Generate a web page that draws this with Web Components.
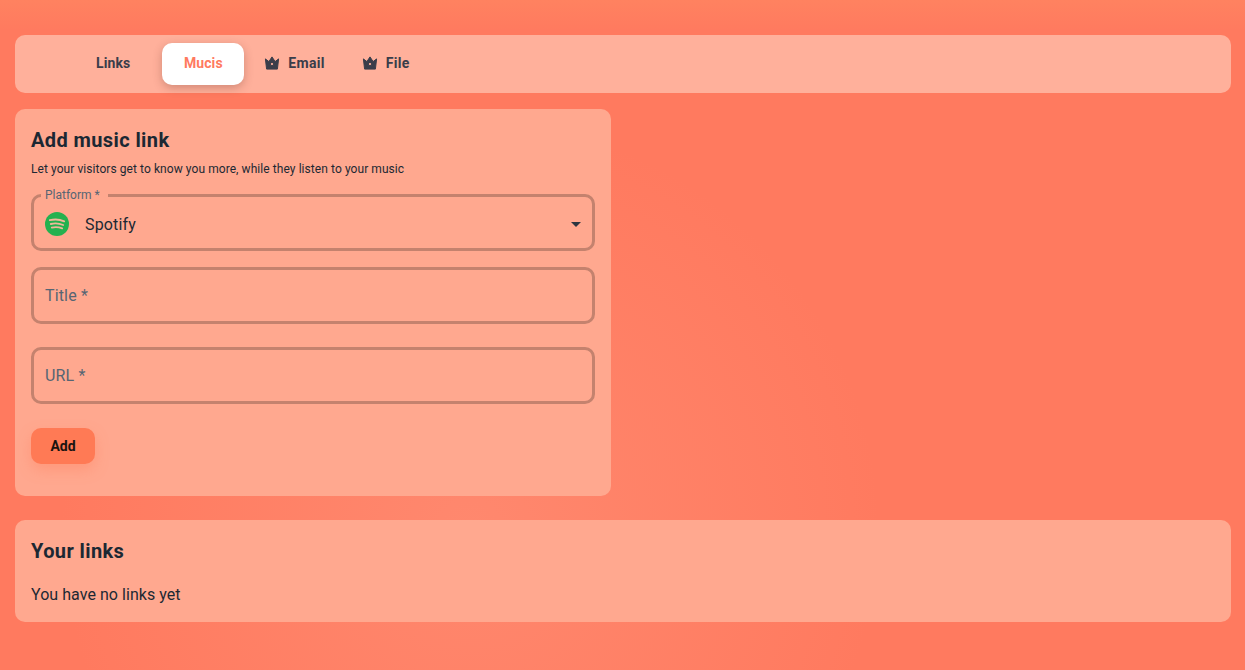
<!DOCTYPE html>
<html>
<head>
<meta charset="utf-8">
<title>Music links</title>
<style>
	html, body { margin: 0; height: 100%; }
	body {
		height: 670px;
		overflow: hidden;
		font-family: Roboto, "Liberation Sans", sans-serif;
		color: #1c2833;
		background:
			radial-gradient(circle 410px at 470px 530px, rgba(255,150,125,0.5), rgba(255,150,125,0) 100%),
			linear-gradient(180deg, #ff8260 0, #ff7a5f 30px, #ff7a5f 100%);
	}
	app-page { display: block; }
</style>
</head>
<body>
<template id="page-tpl">
	<style>
		:host { display: flex; flex-direction: column; padding: 35px 14px 0 15px; }
		.top { margin-bottom: 16px; }
		.bottom { margin-top: 24px; }
	</style>
	<tab-bar class="top">
		<tab-item class="first">Links</tab-item>
		<tab-item active>Mucis</tab-item>
		<tab-item crown>Email</tab-item>
		<tab-item crown>File</tab-item>
	</tab-bar>
	<music-form></music-form>
	<links-list class="bottom"></links-list>
</template>

<template id="bar-tpl">
	<style>
		:host {
			display: flex;
			align-items: center;
			height: 58px;
			box-sizing: border-box;
			padding-left: 59px;
			background: #ffb09b;
			border-radius: 10px;
		}
	</style>
	<slot></slot>
</template>

<template id="tab-tpl">
	<style>
		:host {
			display: flex;
			align-items: center;
			justify-content: center;
			height: 42px;
			padding: 0 22px 2px;
			box-sizing: border-box;
			border-radius: 10px;
			font-size: 14px;
			font-weight: 700;
			letter-spacing: 0.1px;
			color: #3a3d4a;
		}
		:host(.first) { margin-right: 10px; }
		:host([active]) {
			width: 82px;
			padding-left: 0;
			padding-right: 0;
			background: #fff;
			color: #ff7a5f;
			box-shadow: 0 3px 10px rgba(90,40,30,0.28);
		}
		svg { display: none; width: 16px; height: 16px; margin-right: 8px; fill: #3a3d4a; stroke: #3a3d4a; stroke-width: 1; stroke-linejoin: round; }
		:host([crown]) svg { display: block; }
		:host([crown]) { padding: 0 17px 2px 20px; letter-spacing: 0.3px; }
	</style>
	<svg viewBox="0 0 16 16"><path fill-rule="evenodd" d="M1.4 3.9L4.9 6.6 8 1.9l3.1 4.7 3.5-2.7-1.2 10.2H2.6L1.4 3.9zM8 7.4a1.6 1.6 0 1 0 0 3.2 1.6 1.6 0 0 0 0-3.2z"/></svg>
	<slot></slot>
</template>

<template id="form-tpl">
	<style>
		:host {
			display: block;
			width: 596px;
			box-sizing: border-box;
			padding: 16px 16px 32px;
			background: #ffa88f;
			border-radius: 10px;
		}
		h2 { margin: 0; font-size: 20px; line-height: 30px; font-weight: 700; letter-spacing: 0.4px; color: #1c2833; }
		p { margin: 5px 0 16px; font-size: 12px; line-height: 18px; letter-spacing: 0.07px; color: #1c2833; }
		.fields { display: flex; flex-direction: column; }
		outlined-field[name=title] { margin-top: 16px; }
		outlined-field[name=url] { margin-top: 23px; }
		button {
			display: block;
			margin-top: 24px;
			width: 64px;
			height: 36px;
			border: 0;
			border-radius: 10px;
			background: #ff7a55;
			color: #1a1410;
			font: 700 14px Roboto, sans-serif;
			box-shadow: 0 6px 14px rgba(255,122,85,0.35);
		}
	</style>
	<h2>Add music link</h2>
	<p>Let your visitors get to know you more, while they listen to your music</p>
	<div class="fields">
		<outlined-field label="Platform *" select>
			<svg slot="icon" width="24" height="24" viewBox="0 0 24 24">
				<circle cx="12" cy="12" r="12" fill="#24b14f"/>
				<path d="M4.8 8.2c4.6-1.1 10-.8 14.4 1.1M5.8 12c3.8-.9 8.6-.6 12.4 1M6.8 15.6c3.2-.7 7.2-.5 10.4.8" fill="none" stroke="#f0b89a" stroke-width="1.8" stroke-linecap="round"/>
			</svg>
			Spotify
		</outlined-field>
		<outlined-field name="title" placeholder="Title *"></outlined-field>
		<outlined-field name="url" placeholder="URL *"></outlined-field>
	</div>
	<button>Add</button>
</template>

<template id="field-tpl">
	<style>
		:host {
			display: flex;
			align-items: center;
			position: relative;
			height: 57px;
			box-sizing: border-box;
			padding: 0 11px;
			border: 3px solid #c4826e;
			border-radius: 10px;
			font-size: 16px;
			letter-spacing: 0.15px;
			color: #1c2833;
		}
		:host([select]) { padding-top: 3px; }
		.legend {
			display: none;
			position: absolute;
			top: -10px;
			left: 7px;
			padding: 0 8px 0 4px;
			background: #ffa88f;
			font-size: 12px;
			line-height: 16px;
			letter-spacing: 0;
			color: #566573;
		}
		:host([label]) .legend { display: block; }
		.ph { color: #566573; }
		::slotted(svg) { margin-right: 16px; flex: none; }
		.arrow {
			display: none;
			position: absolute;
			right: 11px;
			top: 25px;
			width: 0;
			height: 0;
			border-left: 5px solid transparent;
			border-right: 5px solid transparent;
			border-top: 5px solid #2c3540;
		}
		:host([select]) .arrow { display: block; }
	</style>
	<span class="legend"></span>
	<slot name="icon"></slot>
	<slot></slot>
	<span class="ph"></span>
	<span class="arrow"></span>
</template>

<template id="list-tpl">
	<style>
		:host {
			display: block;
			height: 102px;
			box-sizing: border-box;
			padding: 16px;
			background: #ffa88f;
			border-radius: 10px;
		}
		h2 { margin: 0; font-size: 20px; line-height: 30px; font-weight: 700; letter-spacing: 0.4px; color: #1c2833; }
		p { margin: 16px 0 0; font-size: 16px; line-height: 26px; letter-spacing: 0.05px; color: #1c2833; }
	</style>
	<h2>Your links</h2>
	<p>You have no links yet</p>
</template>

<script>
function fromTemplate(el, id) {
	el.attachShadow({ mode: 'open' });
	el.shadowRoot.appendChild(document.getElementById(id).content.cloneNode(true));
}
class TabBar extends HTMLElement {
	constructor() { super(); fromTemplate(this, 'bar-tpl'); }
}
class TabItem extends HTMLElement {
	constructor() { super(); fromTemplate(this, 'tab-tpl'); }
}
class OutlinedField extends HTMLElement {
	constructor() { super(); fromTemplate(this, 'field-tpl'); }
	connectedCallback() {
		this.shadowRoot.querySelector('.legend').textContent = this.getAttribute('label') || '';
		this.shadowRoot.querySelector('.ph').textContent = this.getAttribute('placeholder') || '';
	}
}
class MusicForm extends HTMLElement {
	constructor() { super(); fromTemplate(this, 'form-tpl'); }
}
class LinksList extends HTMLElement {
	constructor() { super(); fromTemplate(this, 'list-tpl'); }
}
class AppPage extends HTMLElement {
	constructor() { super(); fromTemplate(this, 'page-tpl'); }
}
customElements.define('tab-bar', TabBar);
customElements.define('tab-item', TabItem);
customElements.define('outlined-field', OutlinedField);
customElements.define('music-form', MusicForm);
customElements.define('links-list', LinksList);
customElements.define('app-page', AppPage);
</script>
<app-page></app-page>
</body>
</html>
